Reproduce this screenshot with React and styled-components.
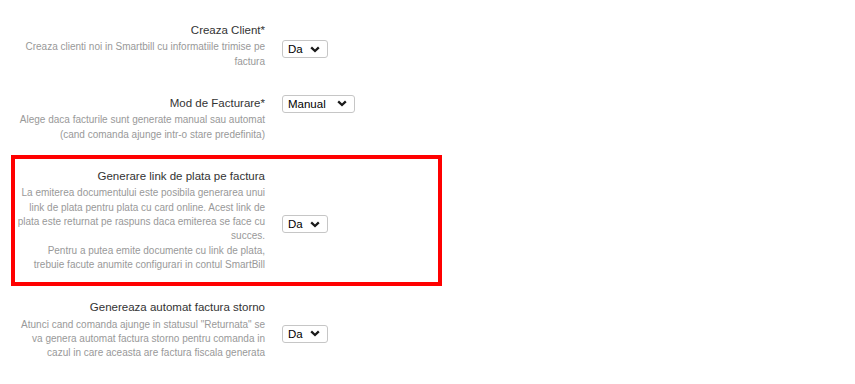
import styled, { createGlobalStyle } from "styled-components";

const GlobalStyle = createGlobalStyle`
  body {
    margin: 0;
    background: #fff;
    font-family: "Liberation Sans", Arial, sans-serif;
  }
`;

const settings = [
  {
    title: "Creaza Client*",
    desc: ["Creaza clienti noi in Smartbill cu informatiile trimise pe factura"],
    value: "Da",
    width: 46,
  },
  {
    title: "Mod de Facturare*",
    desc: ["Alege daca facturile sunt generate manual sau automat (cand comanda ajunge intr-o stare predefinita)"],
    value: "Manual",
    width: 73,
    top: true,
  },
  {
    title: "Generare link de plata pe factura",
    desc: [
      "La emiterea documentului este posibila generarea unui link de plata pentru plata cu card online. Acest link de plata este returnat pe raspuns daca emiterea se face cu succes.",
      "Pentru a putea emite documente cu link de plata, trebuie facute anumite configurari in contul SmartBill",
    ],
    value: "Da",
    width: 46,
    highlighted: true,
  },
  {
    title: "Genereaza automat factura storno",
    desc: [
      'Atunci cand comanda ajunge in statusul "Returnata" se va genera automat factura storno pentru comanda in cazul in care aceasta are factura fiscala generata',
    ],
    value: "Da",
    width: 46,
  },
];

const Chevron = () => (
  <svg width="10" height="7" viewBox="0 0 10 7">
    <path d="M1.2 1.4 L5 5 L8.8 1.4" fill="none" stroke="#1a1a1a" strokeWidth="2.3" />
  </svg>
);

const SettingRow = ({ title, desc, value, width, top, highlighted }) => (
  <Row $highlighted={highlighted}>
    <Label>
      <Title>{title}</Title>
      <Desc>
        {desc.map((line, i) => (
          <span key={i}>
            {i > 0 && <br />}
            {line}
          </span>
        ))}
      </Desc>
    </Label>
    <SelectBox $width={width} $top={top}>
      <span>{value}</span>
      <Chevron />
    </SelectBox>
  </Row>
);

export default function App() {
  return (
    <>
      <GlobalStyle />
      <Page>
        {settings.map((s) => (
          <SettingRow key={s.title} {...s} />
        ))}
      </Page>
    </>
  );
}

const Page = styled.div`
  padding: 9px 0 0 11px;
  min-height: 384px;
  box-sizing: border-box;
`;

const Row = styled.div`
  display: flex;
  width: 431px;
  box-sizing: border-box;
  border: 4px solid ${(p) => (p.$highlighted ? "#ff0000" : "transparent")};
  padding: ${(p) => (p.$highlighted ? "9px 0 10px" : "9px 0")};
`;

const Label = styled.div`
  width: 250px;
  flex-shrink: 0;
  text-align: right;
`;

const Title = styled.div`
  font-size: 11.5px;
  line-height: 1.42857;
  color: #333;
  margin-bottom: 2px;
`;

const Desc = styled.div`
  font-size: 10px;
  line-height: 1.42857;
  color: #999;
`;

const SelectBox = styled.div`
  display: flex;
  align-items: center;
  justify-content: space-between;
  align-self: ${(p) => (p.$top ? "flex-start" : "center")};
  margin-top: ${(p) => (p.$top ? "0" : "8px")};
  margin-left: 17px;
  width: ${(p) => p.$width}px;
  height: 18px;
  box-sizing: border-box;
  padding: 0 7px 0 5px;
  border: 1px solid #c6c6c6;
  border-radius: 3px;
  background: #fff;
  font-size: 11.5px;
  color: #000;
`;
